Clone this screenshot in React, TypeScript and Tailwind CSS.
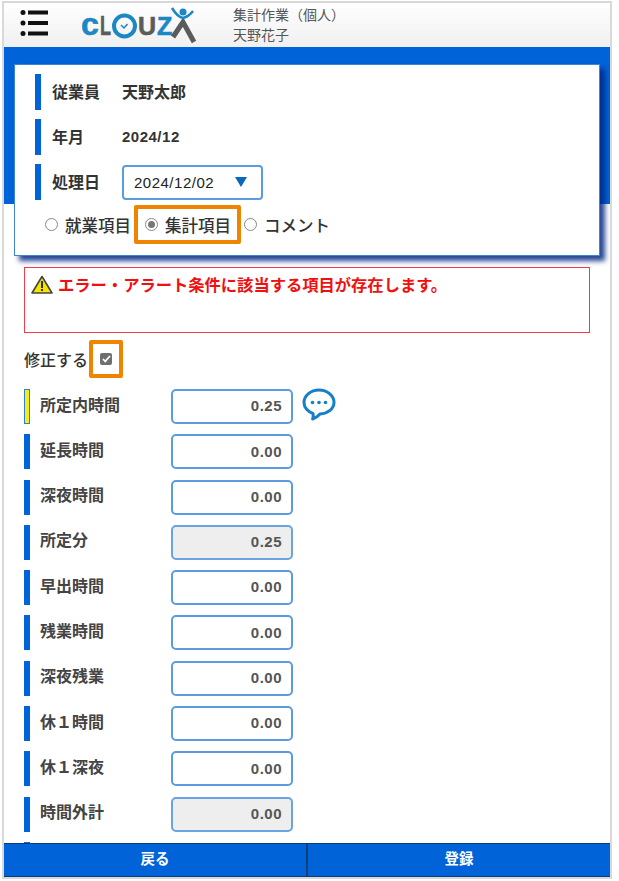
import React from "react";

const FONT = "font-['Noto_Sans_CJK_JP','Liberation_Sans',sans-serif]";

interface Row {
  label: string;
  value: string;
  readOnly?: boolean;
  yellow?: boolean;
  comment?: boolean;
}

const rows: Row[] = [
  { label: "所定内時間", value: "0.25", yellow: true, comment: true },
  { label: "延長時間", value: "0.00" },
  { label: "深夜時間", value: "0.00" },
  { label: "所定分", value: "0.25", readOnly: true },
  { label: "早出時間", value: "0.00" },
  { label: "残業時間", value: "0.00" },
  { label: "深夜残業", value: "0.00" },
  { label: "休１時間", value: "0.00" },
  { label: "休１深夜", value: "0.00" },
  { label: "時間外計", value: "0.00", readOnly: true },
];

const Logo = () => (
  <svg width="118" height="42" viewBox="0 0 118 42">
    <text x="-1" y="31" fontFamily="Liberation Sans" fontWeight="700" fontSize="32" fill="#1b87c4" stroke="#1b87c4" strokeWidth="0.6">c</text>
    <text x="18" y="31" fontFamily="Liberation Sans" fontWeight="700" fontSize="27" fill="#5b5b5b" stroke="#5b5b5b" strokeWidth="0.6" textLength="11" lengthAdjust="spacingAndGlyphs">L</text>
    <circle cx="42.500" cy="22" r="10.500" fill="none" stroke="#1b87c4" strokeWidth="4" />
    <path d="M39 21l3 3 3.500-4" fill="none" stroke="#1b87c4" strokeWidth="1.500" />
    <text x="56" y="31" fontFamily="Liberation Sans" fontWeight="700" fontSize="25" fill="#5b5b5b" stroke="#5b5b5b" strokeWidth="0.6">U</text>
    <text x="75" y="31" fontFamily="Liberation Sans" fontWeight="700" fontSize="25" fill="#1b87c4" stroke="#1b87c4" strokeWidth="0.6">Z</text>
    <path d="M91 33L101 18L112 38" fill="none" stroke="#5b5b5b" strokeWidth="5" />
    <path d="M90 4c3 5 6 9 11 10 4-1 7-3 10-7" fill="none" stroke="#1b87c4" strokeWidth="2.500" />
    <circle cx="101" cy="8" r="3.500" fill="#1b87c4" />
  </svg>
);

const InfoRow = ({ label, children }: { label: string; children: React.ReactNode }) => (
  <div className="flex items-center h-9">
    <div className="w-[6px] h-9 bg-[#0063d8]" />
    <div className="w-[81px] pl-[11px] text-[16px] font-bold text-[#333] -mt-[3px]">{label}</div>
    {children}
  </div>
);

const Radio = ({ label, checked }: { label: string; checked?: boolean }) => (
  <div className="flex items-center gap-[7px]">
    <span className="w-[13px] h-[13px] rounded-full border border-[#888] bg-white flex items-center justify-center">
      {checked && <span className="w-[7px] h-[7px] rounded-full bg-[#777]" />}
    </span>
    <span className="text-[16.500px] font-medium text-[#333] whitespace-nowrap mt-[1px]">{label}</span>
  </div>
);

const App: React.FC = () => {
  return (
    <div className={`${FONT} h-[881px] w-[619px] overflow-hidden bg-white`}>
      <div className="h-[878px] w-[610px] ml-[2px] mt-[1px] border-2 border-[#d9d9d9] flex flex-col bg-white">
        {/* Header */}
        <div className="h-[44px] shrink-0 flex items-center bg-gradient-to-b from-white to-[#f0f0f0]">
          <svg className="ml-[16px] mb-[5px]" width="28" height="26" viewBox="0 0 28 26">
            <circle cx="3" cy="2.500" r="2.500" fill="#111" />
            <circle cx="3" cy="13" r="2.500" fill="#111" />
            <circle cx="3" cy="23.500" r="2.500" fill="#111" />
            <rect x="8" y="0.500" width="20" height="4" fill="#111" />
            <rect x="8" y="11" width="20" height="4" fill="#111" />
            <rect x="8" y="21.500" width="20" height="4" fill="#111" />
          </svg>
          <div className="ml-[34px] w-[118px]">
            <Logo />
          </div>
          <div className="ml-[33px] text-[14px] leading-[20px] text-[#555] mb-[2px]">
            <div>集計作業（個人）</div>
            <div>天野花子</div>
          </div>
        </div>

        <div className="flex-1 min-h-0 relative overflow-hidden">
          {/* Blue band behind the card */}
          <div className="absolute top-0 left-0 right-0 h-[157px] bg-[#0063d8]" />

          <div className="relative mx-[10px] mt-[17px] h-[192px] border border-[#3d86d6] bg-white shadow-[5px_5px_5px_rgba(0,40,130,0.85)] pl-[20px] pt-[9px]">
            <div className="flex flex-col gap-[9px]">
              <InfoRow label="従業員">
                <span className="text-[16px] font-bold text-[#333] -mt-[3px]">天野太郎</span>
              </InfoRow>
              <InfoRow label="年月">
                <span className="text-[15px] font-bold text-[#333] font-['Liberation_Sans'] tracking-[0.5px]">2024/12</span>
              </InfoRow>
              <InfoRow label="処理日">
                <div className="w-[141px] h-[35px] border-2 border-[#5b9be0] rounded-[4px] flex items-center justify-between pl-[10px] pr-[14px]">
                  <span className="text-[15px] text-[#222] font-['Liberation_Sans'] tracking-[0.5px] mt-[3px]">2024/12/02</span>
                  <svg width="12" height="10" viewBox="0 0 12 10">
                    <path d="M0 0h12L6 10z" fill="#0b66bd" />
                  </svg>
                </div>
              </InfoRow>
            </div>
            <div className="flex items-center h-[39px] mt-[5px] ml-[10px]">
              <Radio label="就業項目" />
              <div className="w-[107px] h-[39px] mx-[3px] shrink-0 border-[4px] border-[#ee8400] rounded-[2px] flex items-center pl-[7px]">
                <Radio label="集計項目" checked />
              </div>
              <Radio label="コメント" />
            </div>
          </div>

          <div className="relative mx-[20px] mt-[11px] h-[66px] border border-[#f03c46] px-[6px] pt-[4px] flex items-start">
            <svg className="mt-[3px] shrink-0" width="22" height="19" viewBox="0 0 22 19">
              <path d="M11 1.500L21 18H1z" fill="#f5e400" stroke="#444" strokeWidth="1.600" strokeLinejoin="round" />
              <rect x="10" y="6" width="2" height="7" fill="#333" />
              <rect x="10" y="14" width="2" height="2" fill="#333" />
            </svg>
            <span className="ml-[5px] text-[16.300px] leading-[24px] font-bold text-[#f01010] whitespace-nowrap">エラー・アラート条件に該当する項目が存在します。</span>
          </div>

          <div className="relative ml-[20px] mt-[7px] flex items-center h-[38px]">
            <span className="text-[16px] font-medium text-[#333]">修正する</span>
            <div className="ml-[1px] w-[34px] h-[38px] border-[4px] border-[#ee8400] rounded-[2px] flex items-center justify-center">
              <span className="w-[12px] h-[12px] rounded-[2px] bg-[#6f6f6f] flex items-center justify-center">
                <svg width="9" height="8" viewBox="0 0 9 8">
                  <path d="M1 4l2.200 2.400L8 1" fill="none" stroke="#fff" strokeWidth="1.700" />
                </svg>
              </span>
            </div>
          </div>

          <div className="relative ml-[20px] mt-[11px] flex flex-col gap-[10.300px]">
            {rows.map((r) => (
              <div key={r.label} className="flex items-center h-[35px]">
                <div
                  className={
                    r.yellow
                      ? "w-[6px] h-[35px] bg-[#f2ee1a] border border-[#2f7fd0]"
                      : "w-[6px] h-[35px] bg-[#0063d8]"
                  }
                />
                <div className="w-[141px] pl-[10px] text-[16px] leading-[24px] font-bold text-[#444] -mt-[6px]">{r.label}</div>
                <div
                  className={
                    r.readOnly
                      ? "w-[122px] h-[35px] border-2 border-[#6ba3e0] rounded-[5px] bg-[#eeeeee] flex items-center justify-end pr-[9px]"
                      : "w-[122px] h-[35px] border-2 border-[#5b9be0] rounded-[5px] bg-white flex items-center justify-end pr-[9px]"
                  }
                >
                  <span className="text-[15px] font-bold text-[#555] font-['Liberation_Sans'] tracking-[0.5px]">{r.value}</span>
                </div>
                {r.comment && (
                  <svg className="ml-[9px] -mt-[4px]" width="34" height="33" viewBox="0 0 34 33">
                    <path
                      d="M17 2C9 2 2 7.600 2 14.500c0 5 4 9.400 9 11 .5 1.800.5 3.500-.4 5.500 3-1 5.500-2.800 7.400-5C26 25.500 32 20.500 32 14.500 32 7.600 25 2 17 2z"
                      fill="none"
                      stroke="#1580c8"
                      strokeWidth="3"
                      strokeLinejoin="round"
                    />
                    <circle cx="10.500" cy="14.500" r="1.800" fill="#1580c8" />
                    <circle cx="17" cy="14.500" r="1.800" fill="#1580c8" />
                    <circle cx="23.500" cy="14.500" r="1.800" fill="#1580c8" />
                  </svg>
                )}
              </div>
            ))}
            <div className="w-[6px] h-[35px] bg-[#0063d8]" />
          </div>
        </div>

        {/* Footer */}
        <div className="h-[34px] shrink-0 flex bg-[#0063d8] border-y border-[#0b3d7a] text-white text-[14.500px] font-bold">
          <div className="flex-1 flex items-center justify-center border-r-2 border-[#0b3d7a] pb-[4px]">戻る</div>
          <div className="flex-1 flex items-center justify-center pb-[4px]">登録</div>
        </div>
      </div>
    </div>
  );
};

export default App;
